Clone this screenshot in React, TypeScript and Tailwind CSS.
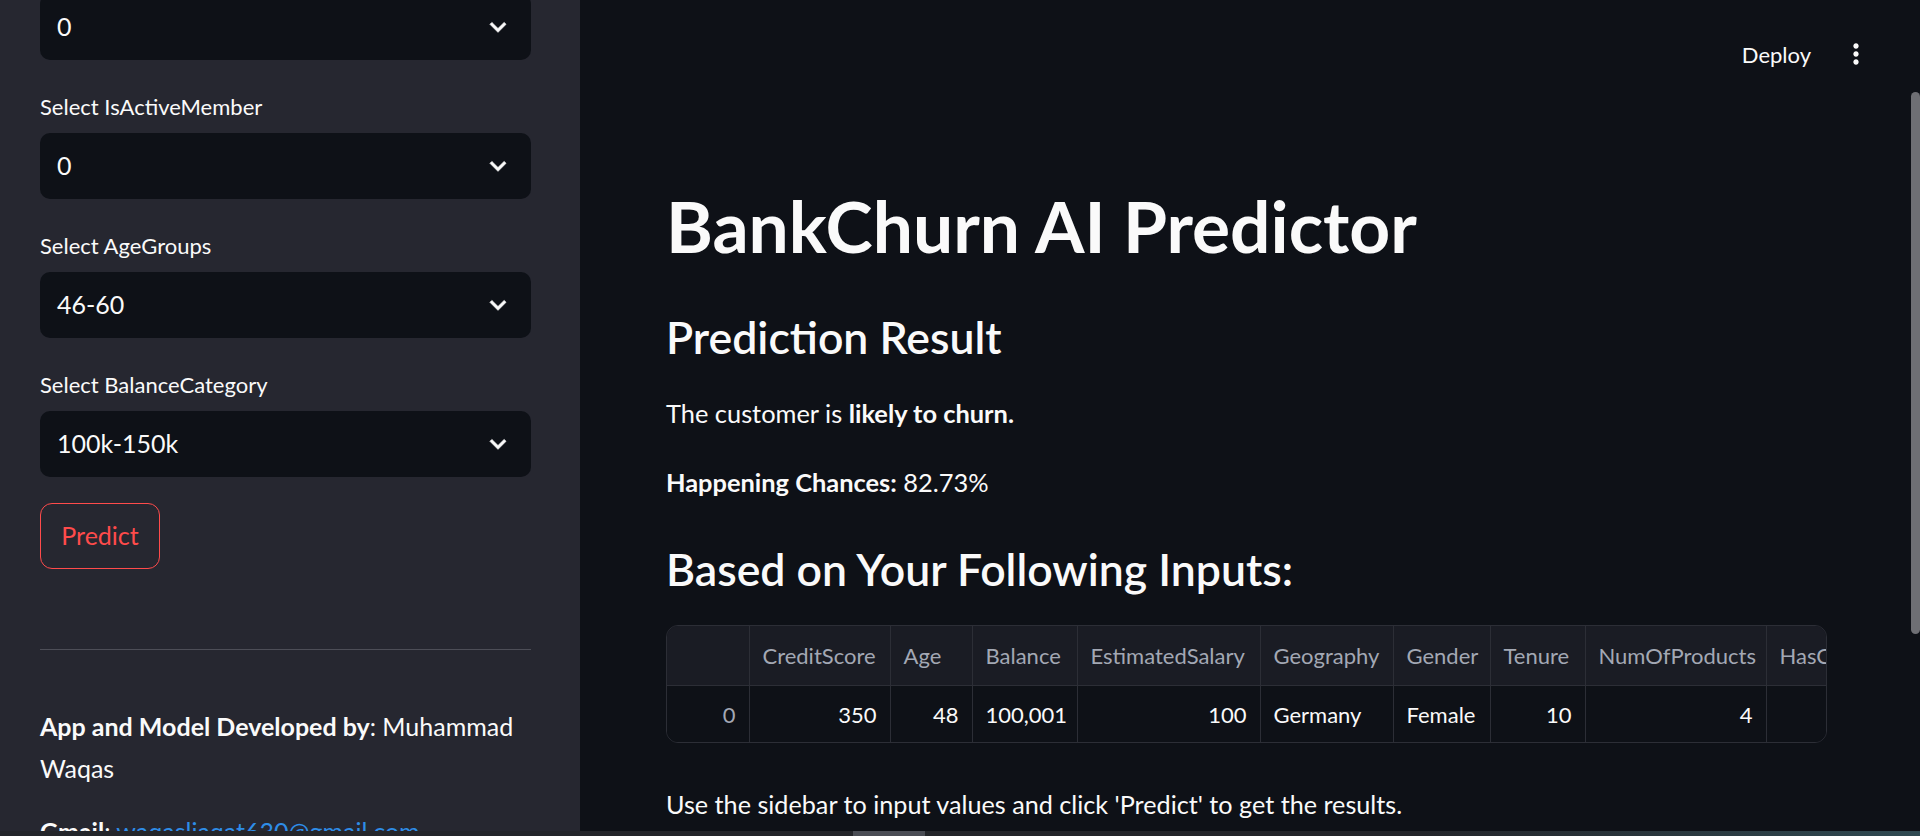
import React from "react";

const FONT = { fontFamily: '"Source Sans Pro", Lato, "Noto Sans", sans-serif' };

const Chevron = () => (
    <svg viewBox="0 0 24 24" className="w-[32px] h-[32px] fill-[#fafafa]">
        <path d="M16.59 8.59 12 13.17 7.41 8.59 6 10l6 6 6-6z" stroke="#fafafa" strokeWidth="0.6" />
    </svg>
);

const Kebab = () => (
    <svg viewBox="0 0 24 24" className="w-[32px] h-[32px] fill-[#fafafa]">
        <path d="M12 8c1.1 0 2-.9 2-2s-.9-2-2-2-2 .9-2 2 .9 2 2 2zm0 2c-1.1 0-2 .9-2 2s.9 2 2 2 2-.9 2-2-.9-2-2-2zm0 6c-1.1 0-2 .9-2 2s.9 2 2 2 2-.9 2-2-.9-2-2-2z" />
    </svg>
);

const SelectBox = ({ value }: { value: string }) => (
    <div className="h-[66px] rounded-[10px] bg-[#0e1117] flex items-center justify-between pl-[17px] pr-[17px]">
        <span className="text-[25px] text-[#fafafa]">{value}</span>
        <Chevron />
    </div>
);

const SidebarSelect = ({ label, value }: { label: string; value: string }) => (
    <div className="flex flex-col mt-[32px]">
        <label className="text-[22px] leading-[30px] text-[#fafafa] mb-[11px]">{label}</label>
        <SelectBox value={value} />
    </div>
);

type Col = { name: string; width: number; value: string; numeric: boolean };

const columns: Col[] = [
    { name: "CreditScore", width: 141, value: "350", numeric: true },
    { name: "Age", width: 82, value: "48", numeric: true },
    { name: "Balance", width: 105, value: "100,001", numeric: true },
    { name: "EstimatedSalary", width: 183, value: "100", numeric: true },
    { name: "Geography", width: 133, value: "Germany", numeric: false },
    { name: "Gender", width: 97, value: "Female", numeric: false },
    { name: "Tenure", width: 95, value: "10", numeric: true },
    { name: "NumOfProducts", width: 181, value: "4", numeric: true },
    { name: "HasCrCard", width: 125, value: "0", numeric: true },
    { name: "IsActiveMember", width: 165, value: "0", numeric: true },
    { name: "AgeGroups", width: 130, value: "46-60", numeric: false },
    { name: "BalanceCategory", width: 175, value: "100k-150k", numeric: false },
];

const InputsTable = () => (
    <div className="w-full h-[118px] rounded-[12px] border border-[#2c2e36] overflow-hidden">
        <table className="table-fixed border-collapse text-[22px]" style={{ width: 82 + columns.reduce((a, c) => a + c.width, 0) }}>
            <colgroup>
                <col style={{ width: 82 }} />
                {columns.map((c) => (
                    <col key={c.name} style={{ width: c.width }} />
                ))}
            </colgroup>
            <thead>
                <tr className="h-[59px] bg-[#1a1c24]">
                    <th className="border-r border-b border-[#2c2e36]" />
                    {columns.map((c) => (
                        <th key={c.name} className="border-r border-b border-[#2c2e36] px-[13px] text-left font-normal text-[#a3a8b4] whitespace-nowrap overflow-hidden">
                            {c.name}
                        </th>
                    ))}
                </tr>
            </thead>
            <tbody>
                <tr className="h-[58px] bg-[#0e1117]">
                    <td className="border-r border-[#2c2e36] px-[13px] text-right text-[#a3a8b4]">0</td>
                    {columns.map((c) => (
                        <td key={c.name} className={`border-r border-[#2c2e36] px-[13px] whitespace-nowrap text-[#fafafa] ${c.numeric ? "text-right" : "text-left"}`}>
                            {c.value}
                        </td>
                    ))}
                </tr>
            </tbody>
        </table>
    </div>
);

export default function App() {
    return (
        <div className="w-[1920px] h-[836px] flex flex-col overflow-hidden bg-[#0e1117]" style={FONT}>
            <div className="flex h-[831px]">
                <aside className="w-[580px] shrink-0 bg-[#262730] overflow-hidden pl-[40px] pr-[49px]">
                    <div className="flex flex-col -mt-[6px]">
                        <SelectBox value="0" />
                        <SidebarSelect label="Select IsActiveMember" value="0" />
                        <SidebarSelect label="Select AgeGroups" value="46-60" />
                        <SidebarSelect label="Select BalanceCategory" value="100k-150k" />
                        <div className="mt-[26px]">
                            <button className="h-[66px] w-[120px] rounded-[12px] border border-[#ff4b4b] text-[#ff4b4b] text-[25px]">
                                Predict
                            </button>
                        </div>
                        <div className="mt-[80px] h-px bg-[#4d4e57]" />
                        <p className="mt-[55px] text-[25px] leading-[42px] text-[#fafafa]">
                            <strong className="font-bold">App and Model Developed by</strong>: Muhammad
                            <br />
                            Waqas
                        </p>
                        <p className="mt-[21px] text-[25px] leading-[42px] text-[#fafafa] whitespace-nowrap">
                            <strong className="font-bold">Gmail</strong>:{" "}
                            <a className="text-[#2e8de8] underline">waqasliaqat630@gmail.com</a>
                        </p>
                    </div>
                </aside>
                <main className="flex-1 min-w-0 flex">
                    <div className="flex-1 min-w-0 flex flex-col">
                        <div className="h-[108px] flex items-center justify-end pr-[39px] gap-[29px]">
                            <span className="text-[22px] text-[#fafafa]">Deploy</span>
                            <Kebab />
                        </div>
                        <div className="flex flex-col min-w-0 pl-[86px] pr-[84px] text-[#fafafa]">
                            <h1 className="mt-[76px] text-[71.3px] leading-[84px] font-bold">BankChurn AI Predictor</h1>
                            <h3 className="mt-[41px] text-[44.6px] leading-[56px] font-semibold">Prediction Result</h3>
                            <p className="mt-[28px] text-[25.4px] leading-[40px]">
                                The customer is <strong className="font-bold">likely to churn.</strong>
                            </p>
                            <p className="mt-[29px] text-[25.4px] leading-[40px]">
                                <strong className="font-bold">Happening Chances:</strong> 82.73%
                            </p>
                            <h3 className="mt-[39px] text-[44.6px] leading-[56px] font-semibold">Based on Your Following Inputs:</h3>
                            <div className="mt-[28px] min-w-0">
                                <InputsTable />
                            </div>
                            <p className="mt-[41px] text-[25.2px] leading-[40px]">
                                Use the sidebar to input values and click 'Predict' to get the results.
                            </p>
                        </div>
                    </div>
                    <div className="w-[9px] shrink-0 pt-[92px]">
                        <div className="h-[542px] rounded-full bg-[#6e6f74]" />
                    </div>
                </main>
            </div>
            <div className="h-[5px] flex bg-[#23252a]">
                <div className="w-[853px]" />
                <div className="w-[72px] bg-[#4a4d55]" />
                <div className="flex-1 bg-gradient-to-r from-[#23252a] via-[#23252a] to-[#2f4a52]" />
            </div>
        </div>
    );
}
